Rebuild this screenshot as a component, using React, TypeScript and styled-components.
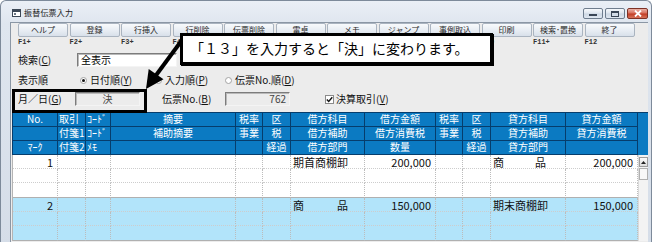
import React from 'react';
import styled, { createGlobalStyle } from 'styled-components';

const JP = `"Noto Sans CJK JP", "Noto Sans", sans-serif`;

const GlobalStyle = createGlobalStyle`
  html, body { margin: 0; padding: 0; background: #ffffff; }
  body { font-family: ${JP}; color: #000; }
  * { box-sizing: border-box; }
`;

const COLS = [45, 28, 25, 125, 27, 28, 74, 71, 27, 28, 75, 72];
const GRID_COLS = COLS.map((c) => `${c}px`).join(' ');

const Stage = styled.div`
  position: relative;
  width: 657px;
  height: 242px;
  overflow: hidden;
  background: #ffffff;
`;

const Window = styled.div`
  width: 652px;
  height: 246px;
  border: 1px solid #7d8a9a;
  border-bottom: none;
  border-radius: 6px 6px 0 0;
  background: linear-gradient(180deg, #eaeff6 0%, #dfe6ef 22px, #d5dde8 100%);
  padding: 0 3px 0 9px;
  display: flex;
  flex-direction: column;
`;

const TitleBar = styled.div`
  height: 21px;
  display: flex;
  align-items: center;
`;

const AppIcon = styled.svg`
  width: 9px;
  height: 8px;
  margin-left: 2px;
  margin-top: 2px;
`;

const Title = styled.span`
  font-size: 8px;
  line-height: 10px;
  margin-left: 3px;
  margin-top: 3px;
  color: #1b1b1b;
  letter-spacing: 0.2px;
`;

const Controls = styled.div`
  margin-left: auto;
  align-self: flex-start;
  margin-top: 7px;
  display: flex;
  gap: 2px;
`;

const CtrlButton = styled.div<{ $close?: boolean }>`
  width: ${(p) => (p.$close ? 21 : 20)}px;
  height: 11px;
  border-radius: 2px;
  border: 1px solid ${(p) => (p.$close ? '#7e3226' : '#6f7d8e')};
  background: ${(p) =>
    p.$close
      ? 'linear-gradient(180deg, #eab3a8 0%, #d8705d 45%, #c23d25 55%, #d7735a 100%)'
      : 'linear-gradient(180deg, #f6f8fb 0%, #dfe6ef 45%, #cdd7e3 55%, #dfe7f1 100%)'};
  display: flex;
  align-items: center;
  justify-content: center;
`;

const Panel = styled.div`
  flex: 1;
  border-top: 1px solid #8b97a5;
  border-left: 1px solid #8b97a5;
  background: #ececec;
  padding-left: 1px;
  display: flex;
  flex-direction: column;
`;

const Toolbar = styled.div`
  display: grid;
  grid-template-columns: repeat(12, 50px);
  column-gap: 1.5px;
  padding-left: 6px;
  height: 14px;
`;

const ToolButton = styled.div`
  height: 14px;
  border: 1px solid #aab4c0;
  border-radius: 2px;
  background: linear-gradient(180deg, #f8fafc 0%, #e9eef4 50%, #d8e0ea 100%);
  font-size: 8px;
  line-height: 12px;
  text-align: center;
  color: #2a2a2a;
  white-space: nowrap;
`;

const FKeys = styled.div`
  display: grid;
  grid-template-columns: repeat(12, 50px);
  column-gap: 1.5px;
  padding-left: 6px;
  height: 9px;
  margin-top: 1px;
`;

const FKey = styled.span`
  font-family: "Liberation Mono", monospace;
  font-size: 7px;
  line-height: 9px;
  font-weight: bold;
  color: #333333;
`;

const FormRow = styled.div<{ $top: number; $h: number }>`
  display: flex;
  align-items: center;
  padding-left: 6px;
  margin-top: ${(p) => p.$top}px;
  height: ${(p) => p.$h}px;
`;

const Label = styled.span<{ $w?: number; $ml?: number }>`
  width: ${(p) => (p.$w ? `${p.$w}px` : 'auto')};
  margin-left: ${(p) => p.$ml ?? 0}px;
  flex: none;
  font-size: 10px;
  line-height: 14px;
  white-space: nowrap;
  color: #111;
`;

const TextBox = styled.div<{ $w: number; $white?: boolean; $align?: string }>`
  width: ${(p) => p.$w}px;
  height: 14px;
  flex: none;
  border: 1px solid;
  border-color: #7c7c7c #f4f4f4 #f4f4f4 #7c7c7c;
  box-shadow: inset 1px 1px 0 #b9b9b9;
  background: ${(p) => (p.$white ? '#ffffff' : '#ececec')};
  font-size: 10px;
  line-height: 12px;
  padding: 0 3px;
  display: flex;
  align-items: center;
  justify-content: ${(p) => p.$align ?? 'flex-start'};
  color: ${(p) => (p.$white ? '#000' : '#444')};
  white-space: nowrap;
`;

const RadioItem = styled.div<{ $w: number }>`
  width: ${(p) => p.$w}px;
  flex: none;
  display: flex;
  align-items: center;
  gap: 3px;
`;

const RadioDot = styled.span<{ $on?: boolean }>`
  width: 7px;
  height: 7px;
  border-radius: 50%;
  border: 1px solid #a4a4a4;
  background: #ffffff;
  position: relative;
  &::after {
    content: '';
    display: ${(p) => (p.$on ? 'block' : 'none')};
    position: absolute;
    left: 1px;
    top: 1px;
    width: 3px;
    height: 3px;
    border-radius: 50%;
    background: #111;
  }
`;

const CheckBox = styled.span`
  width: 9px;
  height: 9px;
  flex: none;
  margin-left: 35px;
  border: 1px solid #8a8a8a;
  background: #ffffff;
  display: flex;
  align-items: center;
  justify-content: center;
`;

const Table = styled.div`
  margin-top: 6px;
  display: flex;
`;

const TableMain = styled.div`
  display: flex;
  flex-direction: column;
`;

const HeaderGrid = styled.div`
  display: grid;
  grid-template-columns: ${GRID_COLS};
  grid-template-rows: 14px 14px 14px;
  background: #0b7ac2;
  border-top: 1px solid #063d6c;
  border-left: 1px solid #063d6c;
`;

const HeadCell = styled.div<{ $align?: string }>`
  border-right: 1px solid #063d6c;
  border-bottom: 1px solid #063d6c;
  color: #ffffff;
  font-size: 10px;
  line-height: 12px;
  text-align: ${(p) => p.$align ?? 'center'};
  padding-left: ${(p) => (p.$align === 'left' ? '1px' : '0')};
  white-space: nowrap;
`;

const Entry = styled.div<{ $bg: string }>`
  display: grid;
  grid-template-columns: ${GRID_COLS};
  grid-template-rows: 14px 14px 15px;
  background: ${(p) => p.$bg};
  border-left: 1px solid #b4b4b4;
`;

const DataCell = styled.div<{ $last?: boolean; $align?: string }>`
  border-right: 1px dotted #bcbcbc;
  border-bottom: 1px ${(p) => (p.$last ? 'solid #b0b0b0' : 'dotted #cdcdcd')};
  font-size: 11px;
  line-height: 13px;
  text-align: ${(p) => p.$align ?? 'left'};
  padding: 1px 4px 0 2px;
  white-space: nowrap;
  color: #111;
`;

const Spread = styled.span<{ $w: number }>`
  display: flex;
  justify-content: space-between;
  width: ${(p) => p.$w}px;
`;

const ScrollCol = styled.div`
  width: 10px;
  display: flex;
  flex-direction: column;
`;

const ScrollHead = styled.div`
  height: 43px;
  background: #0b7ac2;
  border-top: 1px solid #063d6c;
`;

const ScrollTrack = styled.div`
  flex: 1;
  background: #f3f3f3;
  border-left: 1px solid #dadada;
  padding-top: 2px;
  display: flex;
  flex-direction: column;
`;

const ScrollBtn = styled.div`
  height: 10px;
  border: 1px solid #9c9c9c;
  background: linear-gradient(180deg, #fafafa, #dedede);
  display: flex;
  align-items: center;
  justify-content: center;
`;

const ScrollThumb = styled.div`
  height: 12px;
  margin-top: 1px;
  border: 1px solid #b0b0b0;
  background: #f8f8f8;
`;

const Callout = styled.div`
  position: absolute;
  left: 180px;
  top: 33px;
  width: 313px;
  height: 32px;
  border: 3px solid #000;
  box-shadow: 1px 1px 0 #000;
  background: #ffffff;
  font-size: 14px;
  line-height: 24px;
  padding-left: 7px;
  white-space: nowrap;
  color: #000;
  z-index: 3;
`;

const Highlight = styled.div`
  position: absolute;
  left: 12px;
  top: 89px;
  width: 135px;
  height: 24px;
  border: 3px solid #000;
  z-index: 2;
`;

const ArrowLayer = styled.svg`
  position: absolute;
  left: 0;
  top: 0;
  width: 657px;
  height: 242px;
  pointer-events: none;
  z-index: 2;
`;

const BUTTONS = ['ヘルプ', '登録', '行挿入', '行削除', '伝票削除', '電卓', 'メモ', 'ジャンプ', '事例取込', '印刷', '検索･置換', '終了'];
const FKEY_LABELS = ['F1+', 'F2+', 'F3+', 'F4+', '', '', '', '', '', 'F10', 'F11+', 'F12'];

const HEAD: string[][] = [
  ['No.', '取引', 'ｺｰﾄﾞ', '摘要', '税率', '区', '借方科目', '借方金額', '税率', '区', '貸方科目', '貸方金額'],
  ['', '付箋1', 'ｺｰﾄﾞ', '補助摘要', '事業', '税', '借方補助', '借方消費税', '事業', '税', '貸方補助', '貸方消費税'],
  ['ﾏｰｸ', '付箋2', 'ﾒﾓ', '', '', '経過', '借方部門', '数量', '', '経過', '貸方部門', ''],
];

type Cell = React.ReactNode;

const spread = (w: number) => (
  <Spread $w={w}>
    <span>商</span>
    <span>品</span>
  </Spread>
);

const ENTRIES: { bg: string; first: Cell[] }[] = [
  {
    bg: '#ffffff',
    first: ['1', '', '', '', '', '', '期首商棚卸', '200,000', '', '', spread(53), '200,000'],
  },
  {
    bg: '#b2e4fa',
    first: ['2', '', '', '', '', '', spread(55), '150,000', '', '', '期末商棚卸', '150,000'],
  },
];

const RIGHT_COLS = new Set([0, 7, 11]);

export default function App() {
  return (
    <Stage>
      <GlobalStyle />
      <Window>
        <TitleBar>
          <AppIcon viewBox="0 0 9 8">
            <rect x="0.5" y="0.5" width="8" height="7" fill="#ffffff" stroke="#3b4756" />
            <rect x="1" y="1" width="7" height="2" fill="#3b4756" />
            <rect x="2" y="4" width="2" height="2" fill="#6b7786" />
          </AppIcon>
          <Title>振替伝票入力</Title>
          <Controls>
            <CtrlButton>
              <svg width="8" height="4" viewBox="0 0 8 4">
                <rect x="0" y="2" width="8" height="2" fill="#3a4656" />
              </svg>
            </CtrlButton>
            <CtrlButton>
              <svg width="8" height="6" viewBox="0 0 8 6">
                <rect x="0.5" y="0.5" width="7" height="5" fill="none" stroke="#3a4656" />
                <rect x="0.5" y="0.5" width="7" height="1.5" fill="#3a4656" />
              </svg>
            </CtrlButton>
            <CtrlButton $close>
              <svg width="8" height="7" viewBox="0 0 8 7">
                <path d="M1 0.5 L7 6.5 M7 0.5 L1 6.5" stroke="#ffffff" strokeWidth="1.8" />
              </svg>
            </CtrlButton>
          </Controls>
        </TitleBar>
        <Panel>
          <Toolbar>
            {BUTTONS.map((b) => (
              <ToolButton key={b}>{b}</ToolButton>
            ))}
          </Toolbar>
          <FKeys>
            {FKEY_LABELS.map((f, i) => (
              <FKey key={i}>{f}</FKey>
            ))}
          </FKeys>
          <FormRow $top={5} $h={15}>
            <Label $w={59}>
              検索(<u>C</u>)
            </Label>
            <TextBox $w={100} $white>
              全表示
            </TextBox>
          </FormRow>
          <FormRow $top={6} $h={14}>
            <Label $w={62}>表示順</Label>
            <RadioItem $w={75}>
              <RadioDot $on />
              <Label>
                日付順(<u>Y</u>)
              </Label>
            </RadioItem>
            <RadioItem $w={70}>
              <RadioDot />
              <Label>
                入力順(<u>P</u>)
              </Label>
            </RadioItem>
            <RadioItem $w={80}>
              <RadioDot />
              <Label>
                伝票No.順(<u>D</u>)
              </Label>
            </RadioItem>
          </FormRow>
          <FormRow $top={5} $h={14}>
            <Label $w={57}>
              月／日(<u>G</u>)
            </Label>
            <TextBox $w={65} $align="center">
              決
            </TextBox>
            <Label $w={63} $ml={22}>
              伝票No.(<u>B</u>)
            </Label>
            <TextBox $w={65} $align="flex-end">
              762
            </TextBox>
            <CheckBox>
              <svg width="7" height="7" viewBox="0 0 7 7">
                <path d="M0.8 3.4 L2.7 5.4 L6.3 1.2" stroke="#111" strokeWidth="1.4" fill="none" />
              </svg>
            </CheckBox>
            <Label $ml={2}>
              決算取引(<u>V</u>)
            </Label>
          </FormRow>
          <Table>
            <TableMain>
              <HeaderGrid>
                {HEAD.map((row, r) =>
                  row.map((t, c) => (
                    <HeadCell key={`${r}-${c}`} $align={c === 1 || c === 2 ? 'left' : 'center'}>
                      {t}
                    </HeadCell>
                  ))
                )}
              </HeaderGrid>
              {ENTRIES.map((e, i) => (
                <Entry key={i} $bg={e.bg}>
                  {[0, 1, 2].map((r) =>
                    COLS.map((_, c) => (
                      <DataCell key={`${r}-${c}`} $last={r === 2} $align={RIGHT_COLS.has(c) ? 'right' : 'left'}>
                        {r === 0 ? e.first[c] : ''}
                      </DataCell>
                    ))
                  )}
                </Entry>
              ))}
            </TableMain>
            <ScrollCol>
              <ScrollHead />
              <ScrollTrack>
                <ScrollBtn>
                  <svg width="5" height="3" viewBox="0 0 5 3">
                    <path d="M0 3 L2.5 0 L5 3 Z" fill="#222" />
                  </svg>
                </ScrollBtn>
                <ScrollThumb />
              </ScrollTrack>
            </ScrollCol>
          </Table>
        </Panel>
      </Window>
      <ArrowLayer viewBox="0 0 657 242">
        <line x1="185" y1="36" x2="154" y2="78" stroke="#000" strokeWidth="4" />
        <polygon points="146,89 163.5,79.2 148.7,69.1" fill="#000" />
      </ArrowLayer>
      <Highlight />
      <Callout>「１３」を入力すると「決」に変わります。</Callout>
    </Stage>
  );
}
